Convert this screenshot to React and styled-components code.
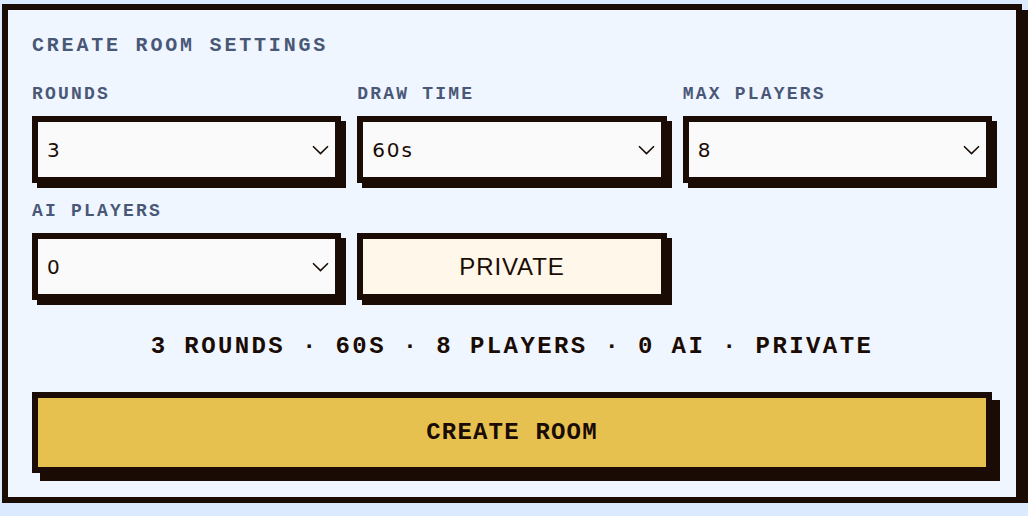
import React, { useState } from "react";
import styled, { createGlobalStyle } from "styled-components";

const ink = "#1a0c04";
const mono = '"Courier New", Courier, "Nimbus Mono PS", FreeMono, "Liberation Mono", monospace';

const Global = createGlobalStyle`
  html, body { margin: 0; padding: 0; background: #dbeafe; }
  body { font-family: ${mono}; color: ${ink}; }
  * { box-sizing: border-box; }
`;

const Panel = styled.section`
  width: 1020px;
  margin: 4px 0 0 2px;
  background: #eff6ff;
  border: 6px solid ${ink};
  box-shadow: 6px 6px 0 ${ink};
  padding: 24px;
  display: flex;
  flex-direction: column;
`;

const Title = styled.h2`
  margin: 0 0 26px;
  font-family: ${mono};
  font-size: 20px;
  line-height: 24px;
  font-weight: 700;
  letter-spacing: 2.8px;
  color: #4a5878;
`;

const Grid = styled.div`
  display: grid;
  grid-template-columns: repeat(3, 1fr);
  column-gap: 16px;
  row-gap: 18px;
`;

const Field = styled.label`
  display: flex;
  flex-direction: column;
  gap: 12px;
`;

const Label = styled.span`
  font-family: ${mono};
  font-size: 18px;
  line-height: 20px;
  font-weight: 700;
  letter-spacing: 2.2px;
  color: #4a5878;
`;

const SelectWrap = styled.div`
  position: relative;
  height: 67px;
  border: 6px solid ${ink};
  box-shadow: 5px 5px 0 ${ink};
  background: #fafafa;
`;

const Select = styled.select`
  appearance: none;
  -webkit-appearance: none;
  width: 100%;
  height: 100%;
  border: none;
  outline: none;
  background: transparent;
  padding: 0 36px 0 9px;
  font-family: "DejaVu Sans", sans-serif;
  font-size: 20px;
  letter-spacing: 1.8px;
  color: ${ink};
`;

const Chevron = styled.svg`
  position: absolute;
  right: 6px;
  top: 50%;
  transform: translateY(-50%);
  width: 17px;
  height: 10px;
  pointer-events: none;
`;

const Spacer = styled.div``;

const ToggleCell = styled.div`
  display: flex;
  flex-direction: column;
  justify-content: flex-end;
`;

const Toggle = styled.button`
  height: 67px;
  border: 6px solid ${ink};
  box-shadow: 5px 5px 0 ${ink};
  background: ${(p) => (p.$on ? "#fff7ea" : "#fafafa")};
  font-family: "Liberation Sans", Arial, sans-serif;
  font-size: 24px;
  letter-spacing: 0.9px;
  color: ${ink};
  cursor: pointer;
  padding: 0;
`;

const Summary = styled.p`
  margin: 33px 0 31px;
  text-align: center;
  font-family: ${mono};
  font-size: 24px;
  line-height: 28px;
  font-weight: 700;
  letter-spacing: 2.4px;
  color: ${ink};
  white-space: pre;
`;

const CreateButton = styled.button`
  height: 81px;
  width: 100%;
  border: 6px solid ${ink};
  box-shadow: 8px 8px 0 ${ink};
  background: #e6c150;
  font-family: ${mono};
  font-size: 24px;
  font-weight: 700;
  letter-spacing: 1.2px;
  color: ${ink};
  cursor: pointer;
`;

function SelectField({ label, value, options, onChange }) {
  return (
    <Field>
      <Label>{label}</Label>
      <SelectWrap>
        <Select value={value} onChange={(e) => onChange(e.target.value)}>
          {options.map((o) => (
            <option key={o.value} value={o.value}>
              {o.label}
            </option>
          ))}
        </Select>
        <Chevron viewBox="0 0 17 10" fill="none">
          <path d="M1 1.2 L8.5 8.6 L16 1.2" stroke={ink} strokeWidth="1.6" />
        </Chevron>
      </SelectWrap>
    </Field>
  );
}

const opts = (arr, fmt = (v) => String(v)) => arr.map((v) => ({ value: String(v), label: fmt(v) }));

export default function App() {
  const [rounds, setRounds] = useState("3");
  const [time, setTime] = useState("60");
  const [max, setMax] = useState("8");
  const [ai, setAi] = useState("0");
  const [priv, setPriv] = useState(true);

  return (
    <>
      <Global />
      <Panel>
        <Title>CREATE ROOM SETTINGS</Title>
        <Grid>
          <SelectField label="ROUNDS" value={rounds} onChange={setRounds} options={opts([1, 2, 3, 4, 5, 6, 8, 10])} />
          <SelectField label="DRAW TIME" value={time} onChange={setTime} options={opts([30, 45, 60, 80, 90, 120], (v) => `${v}s`)} />
          <SelectField label="MAX PLAYERS" value={max} onChange={setMax} options={opts([2, 4, 6, 8, 10, 12])} />
          <SelectField label="AI PLAYERS" value={ai} onChange={setAi} options={opts([0, 1, 2, 3, 4])} />
          <ToggleCell>
            <Toggle $on={priv} onClick={() => setPriv(!priv)}>
              {priv ? "PRIVATE" : "PUBLIC"}
            </Toggle>
          </ToggleCell>
          <Spacer />
        </Grid>
        <Summary>
          {`${rounds} ROUNDS · ${time}S · ${max} PLAYERS · ${ai} AI · ${priv ? "PRIVATE" : "PUBLIC"}`}
        </Summary>
        <CreateButton>CREATE ROOM</CreateButton>
      </Panel>
    </>
  );
}
